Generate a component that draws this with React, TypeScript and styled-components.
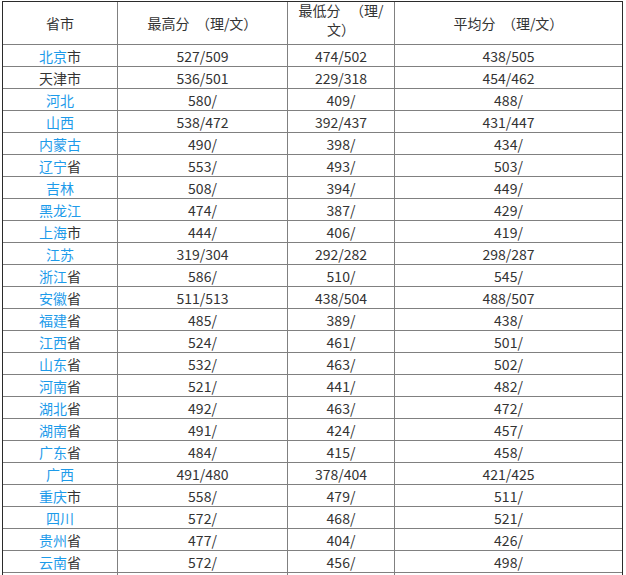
import React from "react"
import styled, { createGlobalStyle } from "styled-components"

const GlobalStyle = createGlobalStyle`
  html, body {
    margin: 0;
    padding: 0;
    background: #ffffff;
    overflow: hidden;
  }
`

const Page = styled.div`
  padding: 1px 0 0 2px;
  height: 575px;
  overflow: hidden;
  font-family: "Noto Sans CJK SC", "Noto Sans", sans-serif;
  font-size: 14px;
  color: #333333;
`

const Table = styled.table`
  width: 621px;
  table-layout: fixed;
  border-collapse: separate;
  border-spacing: 0;
  border: 1px solid #2b2b2b;
  border-bottom: none;
`

const HeadCell = styled.th<{ $wrap?: boolean }>`
  height: 43px;
  box-sizing: border-box;
  padding: 0;
  font-weight: normal;
  line-height: 19px;
  text-align: center;
  vertical-align: ${(p) => (p.$wrap ? "top" : "middle")};
  white-space: nowrap;
  border-right: 1px solid #808080;
  border-bottom: 1px solid #808080;
  &:last-child {
    border-right: none;
  }
`

const HeadLine = styled.span`
  display: block;
  text-align: center;
  &:first-child {
    margin-top: -1px;
  }
`

const Cell = styled.td`
  height: 22px;
  box-sizing: border-box;
  padding: 0;
  line-height: 20px;
  text-align: center;
  vertical-align: middle;
  white-space: nowrap;
  border-right: 1px solid #808080;
  border-bottom: 1px solid #808080;
  &:last-child {
    border-right: none;
  }
`

const Link = styled.a`
  color: #1d9bea;
  text-decoration: none;
`

type Row = {
  link: string
  rest: string
  high: string
  low: string
  avg: string
}

const rows: Row[] = [
  { link: "北京", rest: "市", high: "527/509", low: "474/502", avg: "438/505" },
  { link: "", rest: "天津市", high: "536/501", low: "229/318", avg: "454/462" },
  { link: "河北", rest: "", high: "580/", low: "409/", avg: "488/" },
  { link: "山西", rest: "", high: "538/472", low: "392/437", avg: "431/447" },
  { link: "内蒙古", rest: "", high: "490/", low: "398/", avg: "434/" },
  { link: "辽宁", rest: "省", high: "553/", low: "493/", avg: "503/" },
  { link: "吉林", rest: "", high: "508/", low: "394/", avg: "449/" },
  { link: "黑龙江", rest: "", high: "474/", low: "387/", avg: "429/" },
  { link: "上海", rest: "市", high: "444/", low: "406/", avg: "419/" },
  { link: "江苏", rest: "", high: "319/304", low: "292/282", avg: "298/287" },
  { link: "浙江", rest: "省", high: "586/", low: "510/", avg: "545/" },
  { link: "安徽", rest: "省", high: "511/513", low: "438/504", avg: "488/507" },
  { link: "福建", rest: "省", high: "485/", low: "389/", avg: "438/" },
  { link: "江西", rest: "省", high: "524/", low: "461/", avg: "501/" },
  { link: "山东", rest: "省", high: "532/", low: "463/", avg: "502/" },
  { link: "河南", rest: "省", high: "521/", low: "441/", avg: "482/" },
  { link: "湖北", rest: "省", high: "492/", low: "463/", avg: "472/" },
  { link: "湖南", rest: "省", high: "491/", low: "424/", avg: "457/" },
  { link: "广东", rest: "省", high: "484/", low: "415/", avg: "458/" },
  { link: "广西", rest: "", high: "491/480", low: "378/404", avg: "421/425" },
  { link: "重庆", rest: "市", high: "558/", low: "479/", avg: "511/" },
  { link: "四川", rest: "", high: "572/", low: "468/", avg: "521/" },
  { link: "贵州", rest: "省", high: "477/", low: "404/", avg: "426/" },
  { link: "云南", rest: "省", high: "572/", low: "456/", avg: "498/" },
  { link: "", rest: "", high: "", low: "", avg: "" },
]

const App = () => (
  <Page>
    <GlobalStyle />
    <Table>
      <colgroup>
        <col style={{ width: 115 }} />
        <col style={{ width: 170 }} />
        <col style={{ width: 107 }} />
        <col style={{ width: 227 }} />
      </colgroup>
      <thead>
        <tr>
          <HeadCell>省市</HeadCell>
          <HeadCell>最高分&nbsp;&nbsp;（理/文）</HeadCell>
          <HeadCell $wrap>
            <HeadLine>最低分&nbsp;&nbsp;&nbsp;（理/</HeadLine>
            <HeadLine>文）</HeadLine>
          </HeadCell>
          <HeadCell>平均分&nbsp;&nbsp;（理/文）</HeadCell>
        </tr>
      </thead>
      <tbody>
        {rows.map((r, i) => (
          <tr key={i}>
            <Cell>
              {r.link && <Link href="#">{r.link}</Link>}
              {r.rest}
            </Cell>
            <Cell>{r.high}</Cell>
            <Cell>{r.low}</Cell>
            <Cell>{r.avg}</Cell>
          </tr>
        ))}
      </tbody>
    </Table>
  </Page>
)

export default App
